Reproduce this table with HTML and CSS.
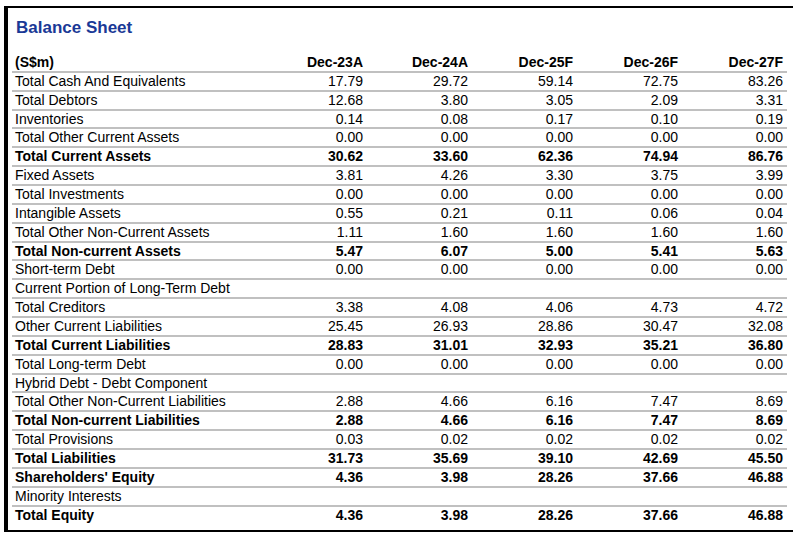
FILE: index.html
```html
<!DOCTYPE html>
<html>
<head>
<meta charset="utf-8">
<title>Balance Sheet</title>
<link rel="stylesheet" href="styles.css">
</head>
<body>
<div class="frame">
  <div class="title">Balance Sheet</div>
  <table class="bs">
    <colgroup>
      <col class="c-label"><col class="c-num"><col class="c-num"><col class="c-num"><col class="c-num"><col class="c-num">
    </colgroup>
    <thead>
      <tr class="b"><th class="lbl">(S$m)</th><th>Dec-23A</th><th>Dec-24A</th><th>Dec-25F</th><th>Dec-26F</th><th>Dec-27F</th></tr>
    </thead>
    <tbody>
      <tr><td class="lbl">Total Cash And Equivalents</td><td>17.79</td><td>29.72</td><td>59.14</td><td>72.75</td><td>83.26</td></tr>
      <tr><td class="lbl">Total Debtors</td><td>12.68</td><td>3.80</td><td>3.05</td><td>2.09</td><td>3.31</td></tr>
      <tr><td class="lbl">Inventories</td><td>0.14</td><td>0.08</td><td>0.17</td><td>0.10</td><td>0.19</td></tr>
      <tr><td class="lbl">Total Other Current Assets</td><td>0.00</td><td>0.00</td><td>0.00</td><td>0.00</td><td>0.00</td></tr>
      <tr class="b"><td class="lbl">Total Current Assets</td><td>30.62</td><td>33.60</td><td>62.36</td><td>74.94</td><td>86.76</td></tr>
      <tr><td class="lbl">Fixed Assets</td><td>3.81</td><td>4.26</td><td>3.30</td><td>3.75</td><td>3.99</td></tr>
      <tr><td class="lbl">Total Investments</td><td>0.00</td><td>0.00</td><td>0.00</td><td>0.00</td><td>0.00</td></tr>
      <tr><td class="lbl">Intangible Assets</td><td>0.55</td><td>0.21</td><td>0.11</td><td>0.06</td><td>0.04</td></tr>
      <tr><td class="lbl">Total Other Non-Current Assets</td><td>1.11</td><td>1.60</td><td>1.60</td><td>1.60</td><td>1.60</td></tr>
      <tr class="b"><td class="lbl">Total Non-current Assets</td><td>5.47</td><td>6.07</td><td>5.00</td><td>5.41</td><td>5.63</td></tr>
      <tr><td class="lbl">Short-term Debt</td><td>0.00</td><td>0.00</td><td>0.00</td><td>0.00</td><td>0.00</td></tr>
      <tr><td class="lbl">Current Portion of Long-Term Debt</td><td></td><td></td><td></td><td></td><td></td></tr>
      <tr><td class="lbl">Total Creditors</td><td>3.38</td><td>4.08</td><td>4.06</td><td>4.73</td><td>4.72</td></tr>
      <tr><td class="lbl">Other Current Liabilities</td><td>25.45</td><td>26.93</td><td>28.86</td><td>30.47</td><td>32.08</td></tr>
      <tr class="b"><td class="lbl">Total Current Liabilities</td><td>28.83</td><td>31.01</td><td>32.93</td><td>35.21</td><td>36.80</td></tr>
      <tr><td class="lbl">Total Long-term Debt</td><td>0.00</td><td>0.00</td><td>0.00</td><td>0.00</td><td>0.00</td></tr>
      <tr><td class="lbl">Hybrid Debt - Debt Component</td><td></td><td></td><td></td><td></td><td></td></tr>
      <tr><td class="lbl">Total Other Non-Current Liabilities</td><td>2.88</td><td>4.66</td><td>6.16</td><td>7.47</td><td>8.69</td></tr>
      <tr class="b"><td class="lbl">Total Non-current Liabilities</td><td>2.88</td><td>4.66</td><td>6.16</td><td>7.47</td><td>8.69</td></tr>
      <tr><td class="lbl">Total Provisions</td><td>0.03</td><td>0.02</td><td>0.02</td><td>0.02</td><td>0.02</td></tr>
      <tr class="b"><td class="lbl">Total Liabilities</td><td>31.73</td><td>35.69</td><td>39.10</td><td>42.69</td><td>45.50</td></tr>
      <tr class="b"><td class="lbl">Shareholders' Equity</td><td>4.36</td><td>3.98</td><td>28.26</td><td>37.66</td><td>46.88</td></tr>
      <tr><td class="lbl">Minority Interests</td><td></td><td></td><td></td><td></td><td></td></tr>
      <tr class="b last"><td class="lbl">Total Equity</td><td>4.36</td><td>3.98</td><td>28.26</td><td>37.66</td><td>46.88</td></tr>
    </tbody>
  </table>
</div>
</body>
</html>
```

FILE: styles.css
```css
html, body {
  margin: 0;
  padding: 0;
  background: #ffffff;
}

body {
  font-family: "Liberation Sans", Arial, sans-serif;
  color: #000000;
}

.frame {
  box-sizing: border-box;
  width: 789px;
  margin: 6px 0 0 4px;
  border-top: 2px solid #000000;
  border-left: 4px solid #000000;
  border-bottom: 2px solid #000000;
  padding: 10px 6px 7px 4px;
}

.title {
  font-size: 17px;
  font-weight: bold;
  line-height: 20px;
  color: #1a3996;
  padding-left: 4px;
  margin-bottom: 16px;
}

.bs {
  width: 775px;
  table-layout: fixed;
  border-collapse: separate;
  border-spacing: 0;
  font-size: 14px;
}

.c-label { width: 250px; }
.c-num { width: 105px; }

.bs th,
.bs td {
  padding: 0 4px 0 0;
  line-height: 16.86px;
  text-align: right;
  white-space: nowrap;
  border-bottom: 2px solid #c0c0c0;
  vertical-align: middle;
}

.bs th {
  font-weight: bold;
}

.bs .lbl {
  text-align: left;
  padding: 0 0 0 3px;
}

.bs tr.b td {
  font-weight: bold;
}

.bs tr.last td {
  border-bottom: none;
}
```
